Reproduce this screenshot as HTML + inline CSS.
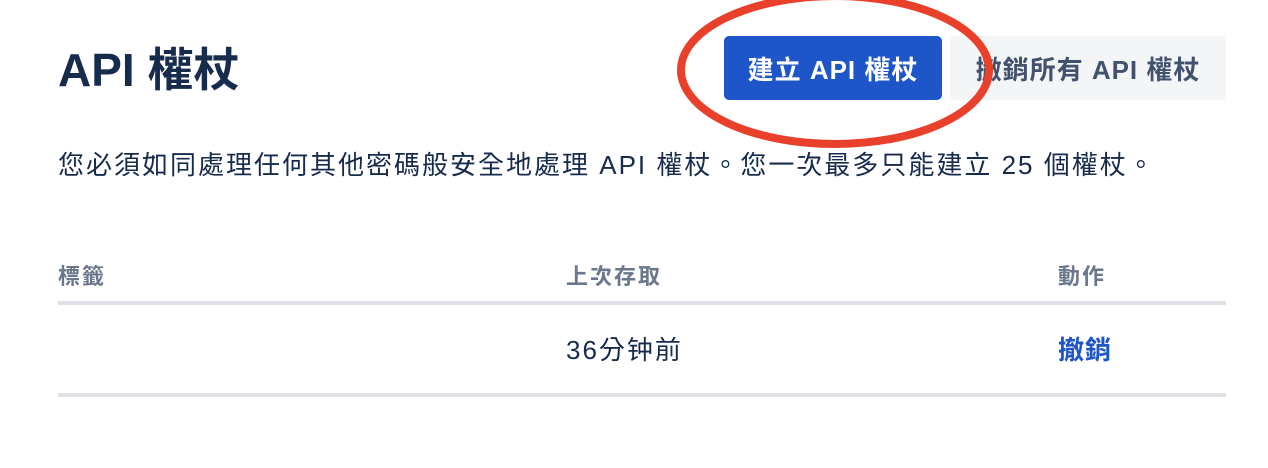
<!DOCTYPE html>
<html><head><meta charset="utf-8"><style>
body{margin:0;width:1268px;height:468px;background:#fff;position:relative;overflow:hidden;font-family:"Liberation Sans","Noto Sans CJK TC",sans-serif;color:#172B4D}
.a{position:absolute;white-space:nowrap}
.btn{position:absolute;top:36px;height:64px;border-radius:5px;display:flex;align-items:center;justify-content:center;font-size:26px;font-weight:bold;letter-spacing:1px}
.line{position:absolute;left:58px;width:1168px;height:4px;background:#DFE1E6}
</style></head><body>
<div class="a" style="left:58px;top:38px;font-size:46px;font-weight:bold;line-height:64px">API 權杖</div>
<div class="btn" style="left:724px;width:218px;background:#1E55C8;color:#fff">建立 API 權杖</div>
<div class="btn" style="left:950px;width:276px;background:#F4F5F7;color:#42526E">撤銷所有 API 權杖</div>
<svg class="a" style="left:0;top:0" width="1268" height="468"><ellipse cx="835" cy="70" rx="154" ry="74" fill="none" stroke="#E8402A" stroke-width="8"/></svg>
<div class="a" style="left:58px;top:147px;font-size:26px;line-height:36px;letter-spacing:2px">您必須如同處理任何其他密碼般安全地處理 API 權杖。您一次最多只能建立 25 個權杖。</div>
<div class="a" style="left:58px;top:263px;font-size:22px;font-weight:bold;color:#6B778C;line-height:28px;letter-spacing:2px">標籤</div>
<div class="a" style="left:566px;top:263px;font-size:22px;font-weight:bold;color:#6B778C;line-height:28px;letter-spacing:2px">上次存取</div>
<div class="a" style="left:1058px;top:263px;font-size:22px;font-weight:bold;color:#6B778C;line-height:28px;letter-spacing:2px">動作</div>
<div class="line" style="top:301px"></div>
<div class="a" style="left:566px;top:333px;font-size:26px;line-height:34px;letter-spacing:2px">36分钟前</div>
<div class="a" style="left:1058px;top:333px;font-size:26px;font-weight:bold;color:#1E55C8;line-height:34px;letter-spacing:1px">撤銷</div>
<div class="line" style="top:393px"></div>
</body></html>
